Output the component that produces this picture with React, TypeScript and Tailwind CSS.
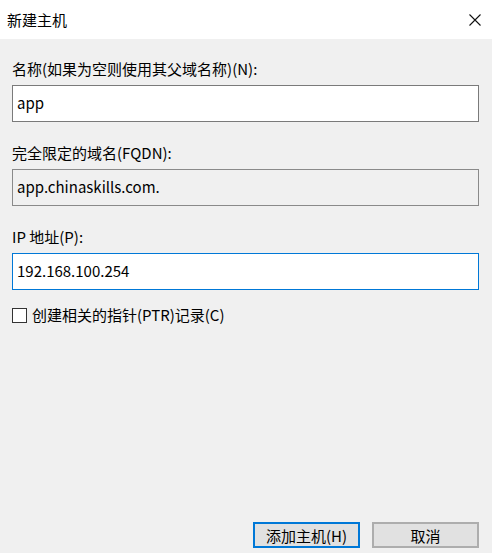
const font = { fontFamily: '"Noto Sans CJK SC", "Liberation Sans", sans-serif' };

const fields = [
  { label: "名称(如果为空则使用其父域名称)(N):", value: "app", kind: "normal" },
  { label: "完全限定的域名(FQDN):", value: "app.chinaskills.com.", kind: "readonly" },
  { label: "IP 地址(P):", value: "192.168.100.254", kind: "focus" },
];

function Field({ label, value, kind }: { label: string; value: string; kind: string }) {
  const box =
    kind === "readonly"
      ? "bg-[#f0f0f0] border-[#8a8a8a]"
      : kind === "focus"
        ? "bg-white border-[#0078d7]"
        : "bg-white border-[#7a7a7a]";
  return (
    <div className="flex flex-col mb-[21px]">
      <div className="h-[20px] leading-[20px] text-[15px] text-black">{label}</div>
      <div className={`mt-[6px] h-[37px] border flex items-center pl-[4px] text-[15px] text-black ${box}`}>
        {value}
      </div>
    </div>
  );
}

export default function App() {
  return (
    <div className="w-[492px] h-[553px] flex flex-col bg-[#f0f0f0] overflow-hidden" style={font}>
      <div className="h-[39px] bg-white flex items-center justify-between pl-[7px] pr-[10px]">
        <span className="text-[15px] text-black leading-[20px]">新建主机</span>
        <svg width="12" height="12" viewBox="0 0 12 12" className="mr-[1px]">
          <path d="M0.5 0.5 L11.5 11.5 M11.5 0.5 L0.5 11.5" stroke="#111" strokeWidth="1.1" />
        </svg>
      </div>
      <div className="flex-1 flex flex-col pt-[20px] pl-[12px] pr-[13px] pb-[5px]">
        {fields.map((f) => (
          <Field key={f.label} {...f} />
        ))}
        <div className="flex items-center h-[20px] -mt-[6px]">
          <div className="w-[15px] h-[15px] border border-[#333] bg-white" />
          <span className="ml-[5px] text-[15px] leading-[20px] text-black">创建相关的指针(PTR)记录(C)</span>
        </div>
        <div className="flex-1" />
        <div className="flex justify-end gap-[12px]">
          <button className="w-[107px] h-[26px] border-2 border-[#0078d7] bg-[#e1e1e1] text-[15px] text-black leading-none">
            添加主机(H)
          </button>
          <button className="w-[107px] h-[26px] border-2 border-[#adadad] bg-[#e1e1e1] text-[15px] text-black leading-none">
            取消
          </button>
        </div>
      </div>
    </div>
  );
}
